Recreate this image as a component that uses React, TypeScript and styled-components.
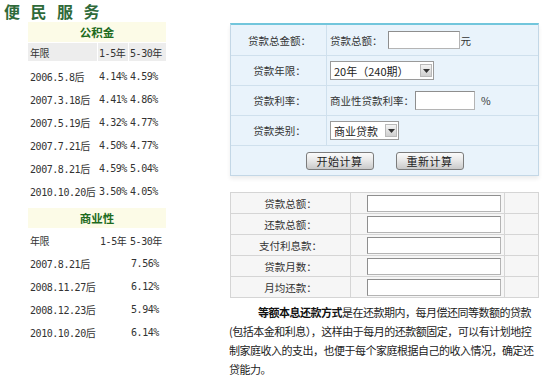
import React from "react";
import styled, { createGlobalStyle } from "styled-components";

const Global = createGlobalStyle`
  html, body { margin: 0; padding: 0; background: #fff; }
  body {
    width: 550px; height: 382px; overflow: hidden;
    font-family: "Noto Sans CJK SC", sans-serif;
    color: #333;
  }
`;

const Page = styled.div`
  display: flex;
  align-items: flex-start;
`;

const LeftCol = styled.div`
  width: 230px;
  flex: none;
`;

const Title = styled.h1`
  margin: 0;
  padding: 2px 0 0 4px;
  height: 20px;
  font-size: 16px;
  line-height: 18px;
  font-weight: bold;
  color: #2f6a3a;
  letter-spacing: 10.5px;
  font-family: "Noto Sans CJK SC", sans-serif;
`;

const RateTable = styled.div`
  margin-left: 28px;
  width: 138px;
  font-family: "DejaVu Sans Mono", "Noto Sans CJK SC", monospace;
  font-size: 10px;
  letter-spacing: -0.45px;
  color: #333;
`;

const Band = styled.div<{ $top?: number }>`
  height: 20px;
  margin-top: ${(p) => p.$top ?? 0}px;
  background: #fcfbe7;
  color: #1e6b1e;
  font-weight: bold;
  font-size: 11.5px;
  letter-spacing: 0;
  font-family: "Noto Sans CJK SC", sans-serif;
  display: flex;
  align-items: center;
  justify-content: center;
`;

const RateRow = styled.div<{ $h: number; $mt?: number; $mb?: number }>`
  display: grid;
  grid-template-columns: 69px 30px 37px;
  column-gap: 1px;
  height: ${(p) => p.$h}px;
  margin-top: ${(p) => p.$mt ?? 0}px;
  margin-bottom: ${(p) => p.$mb ?? 0}px;
`;

const RateCell = styled.div<{ $grey?: boolean; $pad?: number }>`
  display: flex;
  align-items: center;
  white-space: nowrap;
  padding-left: ${(p) => p.$pad ?? 1}px;
  background: ${(p) => (p.$grey ? "#ededed" : "transparent")};
`;

const RightCol = styled.div`
  width: 309px;
  flex: none;
  padding-top: 23px;
`;

const Panel = styled.div`
  border: 1px solid #c3d7e6;
  border-top: 2px solid #72c6dc;
  background: #e9f3fb;
  box-shadow: 0 3px 4px rgba(0, 0, 0, 0.07);
`;

const FormRow = styled.div<{ $h: number }>`
  display: grid;
  grid-template-columns: 96px 1fr;
  height: ${(p) => p.$h}px;
  border-bottom: 1px solid #cfe0ed;
  font-size: 10.5px;
  color: #333;
`;

const FormLabel = styled.div`
  display: flex;
  align-items: center;
  justify-content: center;
  border-right: 1px solid #cfe0ed;
  padding-left: 2px;
`;

const FormValue = styled.div`
  display: flex;
  align-items: center;
  padding-left: 3px;
  white-space: nowrap;
`;

const TextBox = styled.div<{ $w: number; $h: number; $ml?: number }>`
  width: ${(p) => p.$w}px;
  height: ${(p) => p.$h}px;
  margin-left: ${(p) => p.$ml ?? 0}px;
  box-sizing: border-box;
  background: #fff;
  border: 1px solid #b4b4b4;
  border-top-color: #8e8e8e;
  border-left-color: #8e8e8e;
  flex: none;
`;

const Unit = styled.span<{ $ml?: number }>`
  margin-left: ${(p) => p.$ml ?? 1}px;
`;

const Select = styled.div<{ $w: number; $h: number }>`
  width: ${(p) => p.$w}px;
  height: ${(p) => p.$h}px;
  box-sizing: border-box;
  background: #fff;
  border: 1px solid #9a9a9a;
  display: flex;
  align-items: center;
  justify-content: space-between;
  padding: 0 1px 0 3px;
  font-size: 11px;
  color: #222;
`;

const Arrow = styled.div`
  width: 12px;
  height: 13px;
  box-sizing: border-box;
  border: 1px solid #b9b9b9;
  background: linear-gradient(#f4f4f4, #cfcfcf);
  display: flex;
  align-items: center;
  justify-content: center;
`;

const ButtonRow = styled.div`
  height: 29px;
  display: flex;
  align-items: center;
  justify-content: center;
  gap: 22px;
`;

const Button = styled.div`
  width: 68px;
  height: 18px;
  box-sizing: border-box;
  border: 1px solid #7c7c7c;
  border-radius: 3px;
  background: linear-gradient(#fbfbfb, #e6e6e6 50%, #c9c9c9);
  font-size: 11px;
  color: #222;
  display: flex;
  align-items: center;
  justify-content: center;
  letter-spacing: 0.5px;
`;

const ResultTable = styled.div`
  margin-top: 16px;
  display: grid;
  grid-template-columns: 119px 153px 33px;
  grid-auto-rows: 20px;
  gap: 1px;
  border: 1px solid #d5d5d5;
  background: #d5d5d5;
  font-size: 10.5px;
  color: #333;
`;

const ResultCell = styled.div<{ $center?: boolean }>`
  background: #f6f6f6;
  display: flex;
  align-items: center;
  justify-content: ${(p) => (p.$center ? "center" : "flex-start")};
`;

const Para = styled.p`
  margin: 5px 0 0 -1px;
  font-size: 11px;
  line-height: 19px;
  letter-spacing: -0.5px;
  color: #222;
  white-space: nowrap;
`;

const Lead = styled.b`
  margin-left: 29px;
  font-weight: bold;
  color: #111;
`;

const DownArrow = () => (
  <Arrow>
    <svg width="7" height="4" viewBox="0 0 7 4">
      <polygon points="0,0 7,0 3.5,4" fill="#333" />
    </svg>
  </Arrow>
);

const gjj = [
  ["2006.5.8后", "4.14%", "4.59%"],
  ["2007.3.18后", "4.41%", "4.86%"],
  ["2007.5.19后", "4.32%", "4.77%"],
  ["2007.7.21后", "4.50%", "4.77%"],
  ["2007.8.21后", "4.59%", "5.04%"],
  ["2010.10.20后", "3.50%", "4.05%"],
];

const sy = [
  ["2007.8.21后", "", "7.56%"],
  ["2008.11.27后", "", "6.12%"],
  ["2008.12.23后", "", "5.94%"],
  ["2010.10.20后", "", "6.14%"],
];

const results = ["贷款总额：", "还款总额：", "支付利息款：", "贷款月数：", "月均还款："];

export default function App() {
  return (
    <>
      <Global />
      <Page>
        <LeftCol>
          <Title>便民服务</Title>
          <RateTable>
            <Band>公积金</Band>
            <RateRow $h={18} $mt={1} $mb={4}>
              <RateCell $grey $pad={2}>年限</RateCell>
              <RateCell $grey>1-5年</RateCell>
              <RateCell $grey>5-30年</RateCell>
            </RateRow>
            {gjj.map((r) => (
              <RateRow key={r[0]} $h={23}>
                <RateCell $pad={2}>{r[0]}</RateCell>
                <RateCell>{r[1]}</RateCell>
                <RateCell>{r[2]}</RateCell>
              </RateRow>
            ))}
            <Band $top={5}>商业性</Band>
            <RateRow $h={23} $mt={1}>
              <RateCell $pad={2}>年限</RateCell>
              <RateCell $pad={2}>1-5年</RateCell>
              <RateCell>5-30年</RateCell>
            </RateRow>
            {sy.map((r) => (
              <RateRow key={r[0]} $h={23}>
                <RateCell $pad={2}>{r[0]}</RateCell>
                <RateCell>{r[1]}</RateCell>
                <RateCell $pad={2}>{r[2]}</RateCell>
              </RateRow>
            ))}
          </RateTable>
        </LeftCol>

        <RightCol>
          <Panel>
            <FormRow $h={30}>
              <FormLabel>贷款总金额：</FormLabel>
              <FormValue>
                贷款总额：
                <TextBox $w={72} $h={18} $ml={5} />
                <Unit>元</Unit>
              </FormValue>
            </FormRow>
            <FormRow $h={29}>
              <FormLabel>贷款年限：</FormLabel>
              <FormValue>
                <Select $w={104} $h={19}>
                  <span>20年（240期）</span>
                  <DownArrow />
                </Select>
              </FormValue>
            </FormRow>
            <FormRow $h={29}>
              <FormLabel>贷款利率：</FormLabel>
              <FormValue>
                商业性贷款利率：
                <TextBox $w={60} $h={19} $ml={1} />
                <Unit $ml={6}>%</Unit>
              </FormValue>
            </FormRow>
            <FormRow $h={29}>
              <FormLabel>贷款类别：</FormLabel>
              <FormValue>
                <Select $w={69} $h={19}>
                  <span>商业贷款</span>
                  <DownArrow />
                </Select>
              </FormValue>
            </FormRow>
            <ButtonRow>
              <Button>开始计算</Button>
              <Button>重新计算</Button>
            </ButtonRow>
          </Panel>

          <ResultTable>
            {results.map((label) => (
              <React.Fragment key={label}>
                <ResultCell $center>{label}</ResultCell>
                <ResultCell>
                  <TextBox $w={134} $h={17} $ml={16} />
                </ResultCell>
                <ResultCell />
              </React.Fragment>
            ))}
          </ResultTable>

          <Para>
            <Lead>等额本息还款方式</Lead>是在还款期内，每月偿还同等数额的贷款
            <br />
            (包括本金和利息），这样由于每月的还款额固定，可以有计划地控
            <br />
            制家庭收入的支出，也便于每个家庭根据自己的收入情况，确定还
            <br />
            贷能力。
          </Para>
        </RightCol>
      </Page>
    </>
  );
}
